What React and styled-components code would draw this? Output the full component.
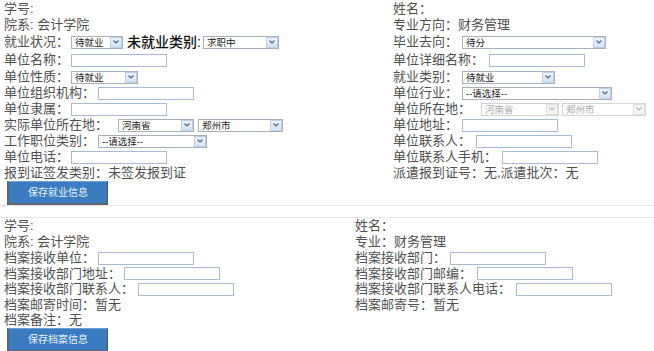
import React from "react";
import styled, { createGlobalStyle } from "styled-components";

// 就业信息 / 档案信息 两个表单块
const GlobalStyle = createGlobalStyle`
  html, body {
    margin: 0;
    padding: 0;
    background: #fff;
  }
  body {
    font-family: "Liberation Sans", "Noto Sans CJK SC", sans-serif;
    font-size: 13px;
    color: #505050;
    overflow: hidden;
  }
`;

const Page = styled.div`
  width: 654px;
  height: 351px;
  overflow: hidden;
`;

const Section = styled.div`
  display: grid;
  grid-template-columns: ${(p) => p.split}px 1fr;
  padding-top: ${(p) => p.top || 0}px;
  border-bottom: ${(p) => (p.bottomLine ? "1px solid #e6e6e6" : "none")};
  border-top: ${(p) => (p.topLine ? "1px solid #e6e6e6" : "none")};
  margin-top: ${(p) => p.gap || 0}px;
`;

const Column = styled.div`
  display: flex;
  flex-direction: column;
  padding-left: ${(p) => p.left}px;
`;

const Row = styled.div`
  display: flex;
  align-items: center;
  height: ${(p) => p.h || 16}px;
  line-height: ${(p) => p.h || 16}px;
  white-space: nowrap;
`;

const Label = styled.span`
  color: #505050;
`;

const Strong = styled.span`
  font-size: 14px;
  color: #111;
  font-weight: 500;
  margin-left: 4px;
  margin-right: 2px;
`;

const TextInput = styled.input`
  box-sizing: border-box;
  width: 96px;
  height: 13px;
  margin: 0 0 0 ${(p) => p.gap ?? 3}px;
  padding: 0;
  border: 1px solid #a9bbd3;
  background: #fff;
  outline: none;
`;

const SelectBox = styled.div`
  box-sizing: border-box;
  display: flex;
  align-items: center;
  width: ${(p) => p.w}px;
  height: 13px;
  margin-left: ${(p) => p.gap ?? 3}px;
  border: 1px solid ${(p) => (p.disabled ? "#d4d4d4" : "#a7b0bb")};
  background: #fff;
`;

const SelectText = styled.span`
  flex: 1;
  padding-left: 3px;
  font-size: 9.5px;
  line-height: 11px;
  color: ${(p) => (p.disabled ? "#a9a9a9" : "#1a1a1a")};
  white-space: nowrap;
`;

const Arrow = styled.span`
  box-sizing: border-box;
  display: flex;
  align-items: center;
  justify-content: center;
  width: 12px;
  height: 11px;
  border: 1px solid ${(p) => (p.disabled ? "#e0e0e0" : "#bdd0e8")};
  background: ${(p) =>
    p.disabled ? "#f3f3f3" : "linear-gradient(#eef4fc, #d3e2f5)"};
`;

const Select = ({ w, value, gap, disabled }) => (
  <SelectBox w={w} gap={gap} disabled={disabled}>
    <SelectText disabled={disabled}>{value}</SelectText>
    <Arrow disabled={disabled}>
      <svg width="6" height="4" viewBox="0 0 6 4">
        <path
          d="M0.5 0.5 L3 3 L5.5 0.5"
          fill="none"
          stroke={disabled ? "#b5b5b5" : "#4d6389"}
          strokeWidth="1.1"
        />
      </svg>
    </Arrow>
  </SelectBox>
);

const SaveButton = styled.button`
  box-sizing: border-box;
  width: 101px;
  height: 24px;
  margin-left: 3px;
  padding: 0;
  background: #3b7bbf;
  border-top: 1px solid #6e9fd4;
  border-left: 2px solid #5f6670;
  border-right: 1px solid #4f5660;
  border-bottom: 2px solid #5f6670;
  color: #e8f0fa;
  font-family: "Liberation Sans", "Noto Sans CJK SC", sans-serif;
  font-size: 10px;
  line-height: 12px;
  cursor: pointer;
`;

const Cell = styled.div`
  display: flex;
  flex-direction: column;
`;

export default function App() {
  return (
    <Page>
      <GlobalStyle />
      <Section split={389} top={1} bottomLine>
        <Column left={4}>
          <Row>
            <Label>学号:</Label>
          </Row>
          <Row>
            <Label>院系: 会计学院</Label>
          </Row>
          <Row h={18}>
            <Label>就业状况：</Label>
            <Select w={52} value="待就业" gap={2} />
            <Strong>未就业类别:</Strong>
            <Select w={76} value="求职中" gap={0} />
          </Row>
          <Row h={18}>
            <Label>单位名称：</Label>
            <TextInput gap={2} />
          </Row>
          <Row>
            <Label>单位性质：</Label>
            <Select w={67} value="待就业" gap={2} />
          </Row>
          <Row>
            <Label>单位组织机构：</Label>
            <TextInput />
          </Row>
          <Row>
            <Label>单位隶属：</Label>
            <TextInput gap={2} />
          </Row>
          <Row>
            <Label>实际单位所在地：</Label>
            <Select w={76} value="河南省" gap={10} />
            <Select w={85} value="郑州市" gap={4} />
          </Row>
          <Row>
            <Label>工作职位类别：</Label>
            <Select w={109} value="--请选择--" />
          </Row>
          <Row>
            <Label>单位电话：</Label>
            <TextInput gap={2} />
          </Row>
          <Row>
            <Label>报到证签发类别：未签发报到证</Label>
          </Row>
          <Cell>
            <SaveButton>保存就业信息</SaveButton>
          </Cell>
        </Column>
        <Column left={4}>
          <Row>
            <Label>姓名：</Label>
          </Row>
          <Row>
            <Label>专业方向：财务管理</Label>
          </Row>
          <Row h={18}>
            <Label>毕业去向：</Label>
            <Select w={144} value="待分" gap={4} />
          </Row>
          <Row h={18}>
            <Label>单位详细名称：</Label>
            <TextInput gap={5} />
          </Row>
          <Row>
            <Label>就业类别：</Label>
            <Select w={93} value="待就业" gap={4} />
          </Row>
          <Row>
            <Label>单位行业：</Label>
            <Select w={150} value="--请选择--" gap={4} />
          </Row>
          <Row>
            <Label>单位所在地：</Label>
            <Select w={78} value="河南省" gap={10} disabled />
            <Select w={84} value="郑州市" gap={3} disabled />
          </Row>
          <Row>
            <Label>单位地址：</Label>
            <TextInput gap={4} />
          </Row>
          <Row>
            <Label>单位联系人：</Label>
            <TextInput gap={5} />
          </Row>
          <Row>
            <Label>单位联系人手机：</Label>
            <TextInput gap={5} />
          </Row>
          <Row>
            <Label>派遣报到证号：无,派遣批次：无</Label>
          </Row>
        </Column>
      </Section>

      <Section split={351} topLine gap={11}>
        <Column left={4}>
          <Row>
            <Label>学号:</Label>
          </Row>
          <Row>
            <Label>院系: 会计学院</Label>
          </Row>
          <Row>
            <Label>档案接收单位：</Label>
            <TextInput />
          </Row>
          <Row h={15}>
            <Label>档案接收部门地址：</Label>
            <TextInput />
          </Row>
          <Row>
            <Label>档案接收部门联系人：</Label>
            <TextInput gap={4} />
          </Row>
          <Row h={15}>
            <Label>档案邮寄时间：暂无</Label>
          </Row>
          <Row>
            <Label>档案备注：无</Label>
          </Row>
          <Cell>
            <SaveButton>保存档案信息</SaveButton>
          </Cell>
        </Column>
        <Column left={4}>
          <Row>
            <Label>姓名：</Label>
          </Row>
          <Row>
            <Label>专业：财务管理</Label>
          </Row>
          <Row>
            <Label>档案接收部门：</Label>
            <TextInput gap={4} />
          </Row>
          <Row h={15}>
            <Label>档案接收部门邮编：</Label>
            <TextInput gap={5} />
          </Row>
          <Row>
            <Label>档案接收部门联系人电话：</Label>
            <TextInput gap={5} />
          </Row>
          <Row h={15}>
            <Label>档案邮寄号：暂无</Label>
          </Row>
        </Column>
      </Section>
    </Page>
  );
}
